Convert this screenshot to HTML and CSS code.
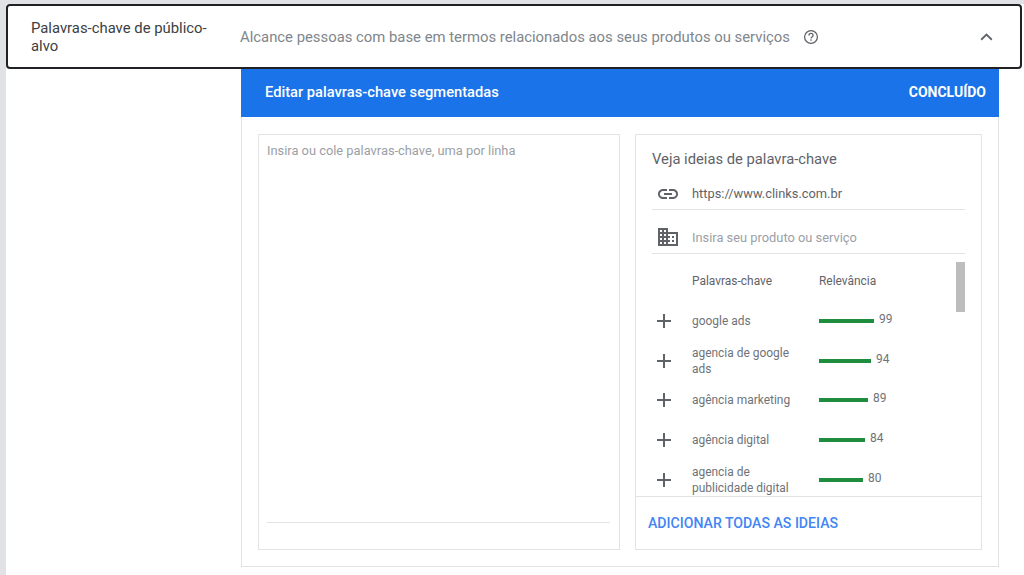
FILE: index.html
```html
<!DOCTYPE html>
<html lang="pt-BR">
<head>
<meta charset="utf-8">
<title>Palavras-chave de público-alvo</title>
<link rel="stylesheet" href="styles.css">
</head>
<body>
<main class="card">
  <header class="head">
    <div class="head-title">Palavras-chave de público-alvo</div>
    <div class="head-desc">Alcance pessoas com base em termos relacionados aos seus produtos ou serviços</div>
    <svg class="help" viewBox="0 0 24 24" width="16" height="16"><circle cx="12" cy="12" r="9.6" fill="none" stroke="#5f6368" stroke-width="1.9"/><path d="M8.9 9.6a3.1 3.1 0 0 1 6.2 0c0 2.2-3.1 2.3-3.1 4.6" fill="none" stroke="#5f6368" stroke-width="1.9"/><rect x="11" y="15.6" width="2" height="2" fill="#5f6368"/></svg>
    <svg class="chev" viewBox="0 0 14 9" width="13" height="8"><path d="M1 7.6 7 1.8l6 5.8" fill="none" stroke="#5f6368" stroke-width="2"/></svg>
  </header>
  <section class="editor">
    <div class="bar">
      <span class="bar-title">Editar palavras-chave segmentadas</span>
      <span class="bar-done">CONCLUÍDO</span>
    </div>
    <div class="panes">
      <div class="pane entry">
        <div class="entry-hint">Insira ou cole palavras-chave, uma por linha</div>
        <div class="entry-line"></div>
      </div>
      <div class="pane ideas">
        <div class="ideas-main">
          <h2 class="ideas-title">Veja ideias de palavra-chave</h2>
          <div class="field field-url">
            <svg class="field-icon" viewBox="0 0 24 24" width="24" height="24"><path fill="#5f6368" d="M3.9 12c0-1.71 1.39-3.1 3.1-3.1h4V7H7c-2.76 0-5 2.24-5 5s2.24 5 5 5h4v-1.9H7c-1.71 0-3.1-1.39-3.1-3.1zM8 13h8v-2H8v2zm9-6h-4v1.9h4c1.71 0 3.1 1.39 3.1 3.1s-1.39 3.1-3.1 3.1h-4V17h4c2.76 0 5-2.24 5-5s-2.24-5-5-5z"/></svg>
            <span class="field-value">https://www.clinks.com.br</span>
          </div>
          <div class="field field-product">
            <svg class="field-icon" viewBox="0 0 24 24" width="24" height="24"><path fill="#5f6368" d="M12 7V3H2v18h20V7H12zM6 19H4v-2h2v2zm0-4H4v-2h2v2zm0-4H4V9h2v2zm0-4H4V5h2v2zm4 12H8v-2h2v2zm0-4H8v-2h2v2zm0-4H8V9h2v2zm0-4H8V5h2v2zm10 12h-8v-2h2v-2h-2v-2h2v-2h-2V9h8v10zm-2-8h-2v2h2v-2zm0 4h-2v2h2v-2z"/></svg>
            <span class="field-hint">Insira seu produto ou serviço</span>
          </div>
          <div class="list">
            <div class="list-body">
              <div class="list-head"><span class="col-name">Palavras-chave</span><span>Relevância</span></div>
              <div class="row"><svg class="plus" viewBox="0 0 14 14" width="14" height="14"><path d="M7 0v14M0 7h14" stroke="#5f6368" stroke-width="2"/></svg><span class="col-name">google ads</span><span class="meter" style="width:55px"></span><span class="score">99</span></div>
              <div class="row"><svg class="plus" viewBox="0 0 14 14" width="14" height="14"><path d="M7 0v14M0 7h14" stroke="#5f6368" stroke-width="2"/></svg><span class="col-name">agencia de google ads</span><span class="meter" style="width:52px"></span><span class="score">94</span></div>
              <div class="row"><svg class="plus" viewBox="0 0 14 14" width="14" height="14"><path d="M7 0v14M0 7h14" stroke="#5f6368" stroke-width="2"/></svg><span class="col-name">agência marketing</span><span class="meter" style="width:49px"></span><span class="score">89</span></div>
              <div class="row"><svg class="plus" viewBox="0 0 14 14" width="14" height="14"><path d="M7 0v14M0 7h14" stroke="#5f6368" stroke-width="2"/></svg><span class="col-name">agência digital</span><span class="meter" style="width:46px"></span><span class="score">84</span></div>
              <div class="row"><svg class="plus" viewBox="0 0 14 14" width="14" height="14"><path d="M7 0v14M0 7h14" stroke="#5f6368" stroke-width="2"/></svg><span class="col-name">agencia de publicidade digital</span><span class="meter" style="width:44px"></span><span class="score">80</span></div>
            </div>
            <div class="scroll"></div>
          </div>
        </div>
        <div class="ideas-foot">ADICIONAR TODAS AS IDEIAS</div>
      </div>
    </div>
  </section>
</main>
</body>
</html>
```
FILE: styles.css
```css
* { box-sizing: border-box; }
html, body { margin: 0; height: 575px; overflow: hidden; }
body {
  background: #e0e2e5;
  padding: 4px 0 0 6px;
  font-family: Roboto, "Liberation Sans", sans-serif;
  color: #5f6368;
}
.card { background: #fff; height: 571px; display: flex; flex-direction: column; }
.head {
  height: 65px;
  margin-right: 2px;
  flex: none;
  background: #fff;
  border: 2px solid #202124;
  border-radius: 4px;
  display: flex;
  align-items: center;
  padding: 0 27px 0 23px;
}
.head-title { width: 209px; padding-right: 20px; font-size: 14.85px; line-height: 18px; color: #3c4043; flex: none; }
.head-desc { font-size: 14.85px; color: #80868b; white-space: nowrap; }
.help { margin-left: 13px; flex: none; }
.chev { margin-left: auto; flex: none; }
.editor { margin: 0 0 0 235px; width: 758px; height: 498px; flex: none; display: flex; flex-direction: column; border: 1px solid #e3e3e3; border-top: 0; }
.bar {
  height: 48px;
  margin: 0 -1px;
  flex: none;
  background: #1a73e8;
  color: #fff;
  display: flex;
  align-items: center;
  justify-content: space-between;
  padding: 0 13px 2px 24px;
  font-size: 14.7px;
  font-weight: 500;
}
.bar-done { font-size: 14px; font-weight: 700; }
.panes { display: flex; gap: 15px; padding: 17px 16px 16px 16px; flex: 1; min-height: 0; }
.pane { border: 1px solid #e3e3e3; height: 416px; }
.entry { width: 362px; display: flex; flex-direction: column; padding: 8px 9px 26px 8px; }
.entry-hint { font-size: 12.85px; line-height: 15px; color: #9aa0a6; flex: 1; }
.entry-line { height: 1px; background: #e3e3e3; }
.ideas { width: 347px; display: flex; flex-direction: column; }
.ideas-main { flex: 1; min-height: 0; overflow: hidden; padding: 0 16px; }
.ideas-title { margin: 15px 0 0; font-size: 14.75px; line-height: 18px; font-weight: 400; color: #5f6368; }
.field {
  height: 44px;
  border-bottom: 1px solid #e3e3e3;
  display: flex;
  align-items: center;
  font-size: 12.85px;
}
.field-url { height: 42px; padding-top: 10px; }
.field-product { padding-top: 11px; }
.field-icon { margin: 0 12px 0 4px; flex: none; }
.field-value { color: #5f6368; }
.field-hint { color: #9aa0a6; }
.list { display: flex; padding-top: 8px; }
.list-body { width: 304px; flex: none; }
.list-head { display: flex; font-size: 11.95px; color: #5f6368; height: 40px; padding: 0 0 2px 40px; align-items: center; }
.col-name { width: 127px; flex: none; font-size: 11.95px; line-height: 16px; color: #5f6368; }
.row { height: 39.6px; display: flex; align-items: center; padding-bottom: 1px; }
.row .col-name { padding-right: 24px; color: #6f7378; }
.plus { margin: 0 21px 0 5px; flex: none; }
.meter { height: 4px; background: #1e8e3e; flex: none; }
.score { font-size: 11.95px; margin: -4px 0 0 5px; color: #6f7378; }
.scroll { width: 9px; height: 50px; background: #bdbdbd; flex: none; }
.ideas-foot {
  flex: none;
  height: 53px;
  border-top: 1px solid #e3e3e3;
  padding: 0 12px;
  display: flex;
  align-items: center;
  font-size: 14.1px;
  font-weight: 500;
  color: #4285f4;
}
```
